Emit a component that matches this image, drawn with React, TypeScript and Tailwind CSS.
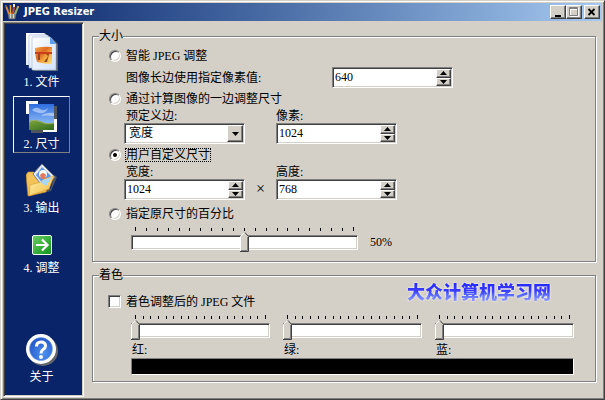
import { useId, useState } from 'react';
import type { ReactNode } from 'react';

const sunken =
  'border border-[#808080] border-r-white border-b-white bg-white shadow-[inset_1px_1px_0_#404040,inset_-1px_-1px_0_#d4d0c8]';
const raised =
  'border border-white border-r-[#404040] border-b-[#404040] bg-[#d4d0c8] shadow-[inset_-1px_-1px_0_#808080]';

function BrushesIcon() {
  return (
    <svg width="16" height="16" viewBox="0 0 16 16" fill="none">
      <path d="M4 9h8l-1 6H5z" fill="#8a8f86" stroke="#6b6f70" strokeWidth="0.6" />
      <path d="M6.500 10v4M9.500 10v4" stroke="#d5d9c6" />
      <path d="M5 10 2 2" stroke="#d88a40" strokeWidth="2" />
      <path d="M6.500 10V1" stroke="#e0b04c" strokeWidth="1.500" />
      <path d="M9 10l1-8" stroke="#d2482c" strokeWidth="2" />
      <path d="m11 10 3-7" stroke="#8fb06a" strokeWidth="2" />
      <path d="M1 1h2v2H1z" fill="#6f5b4c" />
      <path d="M9 0h2v3H9z" fill="#f0e2b8" />
      <path d="M13 2h2v2h-2z" fill="#c49870" />
    </svg>
  );
}

function FilesIcon() {
  return (
    <svg width="32" height="38" viewBox="0 0 32 38">
      <defs>
        <linearGradient id="files-page" x1="0" y1="0" x2="1" y2="1">
          <stop offset="0" stopColor="#ffffff" />
          <stop offset="1" stopColor="#cfe0fb" />
        </linearGradient>
        <linearGradient id="files-sun" x1="0" y1="0" x2="1" y2="1">
          <stop offset="0" stopColor="#f8a848" />
          <stop offset="0.4" stopColor="#dc6a24" />
          <stop offset="0.6" stopColor="#f3a53c" />
          <stop offset="1" stopColor="#fbe27c" />
        </linearGradient>
      </defs>
      <path d="M1 0h18l6 6v26H1z" fill="#6f7888" />
      <path d="M0 0h18l5 5v27H0z" fill="url(#files-page)" />
      <path d="M4 2h18l6 6v27H3z" fill="#7b8494" />
      <path d="M3 2h18l5 5v28H3z" fill="url(#files-page)" stroke="#9fb4dc" strokeWidth="0.6" />
      <path d="M7 4h18l7 7v27H8z" fill="#5d6066" />
      <path d="M6 4h18l6 7v26H6z" fill="url(#files-page)" stroke="#9fb4dc" strokeWidth="0.6" />
      <path d="M24 4v7h6z" fill="#5b9cf5" />
      <path d="M9 15q8-2 17-1v17q-8 0-15-2-2-6-2-14z" fill="url(#files-sun)" />
      <path d="M9 19h17v2H9z" fill="#c8401a" />
      <path d="M12 21h2v6h-2zM20 21q3 2 1 4t-3 4h3l2-8z" fill="#9a4522" />
    </svg>
  );
}

function PictureIcon() {
  return (
    <svg width="32" height="32" viewBox="0 0 32 32">
      <defs>
        <linearGradient id="picture-sky" x1="0" y1="0" x2="0" y2="1">
          <stop offset="0" stopColor="#2f6de0" />
          <stop offset="1" stopColor="#a9d2fb" />
        </linearGradient>
        <linearGradient id="picture-grass" x1="0" y1="0" x2="1" y2="1">
          <stop offset="0" stopColor="#7da53c" />
          <stop offset="1" stopColor="#2f6a1e" />
        </linearGradient>
      </defs>
      <path d="M0 0h12v3H3v10H0z" fill="#ffffff" />
      <path d="M28 5h3v13h-3zM5 29h12v3H5z" fill="#50545c" />
      <path d="M28 18h3v13H17v-3h11z" fill="#ffffff" />
      <path d="M3 3h25v26H3z" fill="url(#picture-sky)" />
      <path d="M6 9q4-4 8-1t8-1q-2 6-8 5T6 9zM15 15q5-4 13-3v3q-8-1-13 0z" fill="#dcebff" opacity="0.55" />
      <path d="M3 21q8-3 13 0t12 1v7H3z" fill="url(#picture-grass)" />
      <path d="M3 20q7-2 12 1t13 1" stroke="#9cae55" fill="none" />
    </svg>
  );
}

function FolderIcon() {
  return (
    <svg width="32" height="34" viewBox="0 0 32 34">
      <defs>
        <linearGradient id="folder-front" x1="0" y1="0" x2="1" y2="1">
          <stop offset="0" stopColor="#fff3b4" />
          <stop offset="1" stopColor="#f0b838" />
        </linearGradient>
      </defs>
      <path d="m4 33 21-5 6-14-3-2-3 13z" fill="#4d5360" />
      <path d="m0 12 2-3h6l2 2 6-1 8 3-4 16-18 4z" fill="#f3c258" stroke="#c58a2c" strokeWidth="0.6" />
      <path d="M16 1 29 14 17 24 7 11z" fill="#e8ecf2" stroke="#737b8a" />
      <path d="m16 4 9 9-8 8-7-9z" fill="#5d97ea" />
      <circle cx="17" cy="11" r="4" fill="#ffffff" />
      <path d="M14 12q3-4 6 0l-1 4h-4z" fill="#e27a58" />
      <path d="m3 33 1-11 11-3 3-3 10-3-5 13z" fill="url(#folder-front)" stroke="#d29a34" strokeWidth="0.6" />
      <path d="m14 19 3-2 9-3-6 9z" fill="#a9d5f8" />
    </svg>
  );
}

function ArrowIcon() {
  return (
    <svg width="32" height="30" viewBox="0 0 32 30">
      <defs>
        <linearGradient id="arrow-green" x1="0" y1="0" x2="1" y2="1">
          <stop offset="0" stopColor="#69cf64" />
          <stop offset="1" stopColor="#10921a" />
        </linearGradient>
      </defs>
      <rect x="6.500" y="8.500" width="19" height="19" rx="1.500" fill="url(#arrow-green)" stroke="#f4fff2" />
      <path d="M10 18h11M16 12.500l5.500 5.500-5.500 5.500" stroke="#ffffff" strokeWidth="2.200" fill="none" />
    </svg>
  );
}

function HelpIcon() {
  return (
    <svg width="32" height="32" viewBox="0 0 32 32" fill="none">
      <defs>
        <radialGradient id="help-blue" cx="0.6" cy="0.7" r="0.7">
          <stop offset="0" stopColor="#4f93f0" />
          <stop offset="1" stopColor="#2457c8" />
        </radialGradient>
      </defs>
      <circle cx="17" cy="17" r="15" fill="#63666c" />
      <circle cx="15" cy="15" r="15" fill="#ffffff" />
      <circle cx="15" cy="15" r="11.500" fill="url(#help-blue)" stroke="#7fa6e8" strokeWidth="0.6" />
      <path d="M10.500 12.500q0-4.500 4.500-4.500t4.500 4q0 2-2.500 3.500-2 1.200-2 4" stroke="#ffffff" strokeWidth="3" />
      <circle cx="15" cy="23" r="2" fill="#ffffff" />
    </svg>
  );
}

interface NavButtonProps {
  icon: ReactNode;
  num?: string;
  label: string;
  active?: boolean;
  onClick?: () => void;
}

function NavButton({ icon, num, label, active, onClick }: NavButtonProps) {
  return (
    <button
      type="button"
      onClick={onClick}
      className={`flex w-[57px] flex-col items-center gap-[5px] border px-1 pt-1 pb-[2px] leading-3 text-white ${
        active ? 'border-white border-r-[#808080] border-b-[#808080]' : 'border-transparent'
      }`}
    >
      {icon}
      <span className="flex gap-[3px] whitespace-nowrap">
        {num && <span>{num}</span>}
        <span>{label}</span>
      </span>
    </button>
  );
}

interface GroupProps {
  title: string;
  children: ReactNode;
}

function Group({ title, children }: GroupProps) {
  return (
    <fieldset className="relative min-w-0 border border-[#808080] pl-4 shadow-[1px_1px_0_#fff,inset_1px_1px_0_#fff]">
      <legend className="relative -ml-[10px] bg-[#d4d0c8] leading-3">{title}</legend>
      {children}
    </fieldset>
  );
}

interface ModeProps {
  value: string;
  label: string;
  mode: string;
  onChange: (value: string) => void;
}

function Mode({ value, label, mode, onChange }: ModeProps) {
  const id = useId();
  const checked = mode === value;
  return (
    <div className="flex h-5 items-center gap-1">
      <input
        id={id}
        type="radio"
        name="mode"
        checked={checked}
        onChange={() => onChange(value)}
        className="grid size-3 shrink-0 appearance-none place-items-center rounded-full border border-[#808080] border-r-white border-b-white bg-white shadow-[inset_1px_1px_0_#404040,inset_-1px_-1px_0_#d4d0c8] checked:before:size-1 checked:before:rounded-full checked:before:bg-black"
      />
      <label
        htmlFor={id}
        className={`border border-dotted leading-3 ${checked ? 'border-black' : 'border-transparent'}`}
      >
        {label}
      </label>
    </div>
  );
}

function Spin({ id, initial }: { id: string; initial: number }) {
  const [value, setValue] = useState(initial);
  return (
    <div className={`flex h-[21px] w-[121px] p-px ${sunken}`}>
      <input
        id={id}
        type="text"
        value={value}
        onChange={(e) => setValue(Number(e.target.value) || 0)}
        className="min-w-0 flex-1 px-px pb-px leading-4 outline-none"
      />
      <div className="flex w-[15px] flex-col">
        <button
          type="button"
          aria-label="+"
          onClick={() => setValue(value + 1)}
          className={`flex flex-1 items-center justify-center ${raised}`}
        >
          <svg width="7" height="4" viewBox="0 0 7 4">
            <path d="M3.500 0 7 4H0z" />
          </svg>
        </button>
        <button
          type="button"
          aria-label="-"
          onClick={() => setValue(value - 1)}
          className={`flex flex-1 items-center justify-center ${raised}`}
        >
          <svg width="7" height="4" viewBox="0 0 7 4">
            <path d="M0 0h7L3.500 4z" />
          </svg>
        </button>
      </div>
    </div>
  );
}

interface SliderProps {
  id: string;
  ticks: number;
  value: number;
  max: number;
  onChange: (value: number) => void;
}

function Slider({ id, ticks, value, max, onChange }: SliderProps) {
  const ratio = value / max;
  return (
    <div className="relative h-[25px]">
      <div className="flex h-1 items-end justify-between px-1">
        {Array.from({ length: ticks }, (_, i) => (
          <span key={i} className="h-[3px] w-px bg-black first:h-1 last:h-1" />
        ))}
      </div>
      <div className={`mt-1 h-[15px] ${sunken}`} />
      <svg
        width="9"
        height="20"
        viewBox="0 0 9 20"
        className="absolute bottom-0"
        style={{ left: `calc(${ratio * 100}% - ${ratio * 9}px)` }}
      >
        <path d="M0 4.500 4.500 0 9 4.500V20H0z" fill="#d4d0c8" />
        <path d="M.5 19V4.500l4-4" stroke="#ffffff" fill="none" />
        <path d="M7.500 5v13.500H1" stroke="#808080" fill="none" />
        <path d="m5 .5 3.500 4v15H0" stroke="#404040" fill="none" />
      </svg>
      <input
        id={id}
        type="range"
        min={0}
        max={max}
        value={value}
        onChange={(e) => onChange(Number(e.target.value))}
        className="absolute inset-x-0 bottom-0 h-5 w-full opacity-0"
      />
    </div>
  );
}

function TitleBar() {
  return (
    <header className="mb-px flex h-[18px] items-center bg-gradient-to-r from-[#0a246a] to-[#a6caf0] pr-[2px] pl-px">
      <BrushesIcon />
      <h1 className="ml-1 flex-1 font-['DejaVu_Sans_Condensed','DejaVu_Sans',sans-serif] text-[11px] font-bold text-white">
        JPEG Resizer
      </h1>
      <button type="button" aria-label="最小化" className={`flex h-[14px] w-4 items-center justify-center ${raised}`}>
        <svg width="12" height="10" viewBox="0 0 12 10">
          <path d="M3 8h6v2H3z" />
        </svg>
      </button>
      <button type="button" aria-label="最大化" disabled className={`flex h-[14px] w-4 items-center justify-center ${raised}`}>
        <svg width="12" height="10" viewBox="0 0 12 10" fill="none">
          <path d="M2.500 1v8.500h8V1M2 2.500h8" stroke="#ffffff" />
          <path d="M1.500.5h8v8h-8zM1 1.500h9" stroke="#808080" />
        </svg>
      </button>
      <button type="button" aria-label="关闭" className={`ml-[2px] flex h-[14px] w-4 items-center justify-center ${raised}`}>
        <svg width="12" height="10" viewBox="0 0 12 10">
          <path d="m2.500 2 6 6m0-6-6 6" stroke="#000000" strokeWidth="1.800" />
        </svg>
      </button>
    </header>
  );
}

const steps = [
  { num: '1.', label: '文件', icon: <FilesIcon /> },
  { num: '2.', label: '尺寸', icon: <PictureIcon /> },
  { num: '3.', label: '输出', icon: <FolderIcon /> },
  { num: '4.', label: '调整', icon: <ArrowIcon /> },
];

const channels = [
  { id: 'red', label: '红:' },
  { id: 'green', label: '绿:' },
  { id: 'blue', label: '蓝:' },
];

export default function App() {
  const [step, setStep] = useState(1);
  const [mode, setMode] = useState('custom');
  const [percent, setPercent] = useState(50);
  const [tint, setTint] = useState([0, 0, 0]);

  return (
    <div className="flex min-h-screen flex-col border border-[#d4d0c8] border-r-[#404040] border-b-[#404040] bg-[#d4d0c8] p-[2px] font-['Liberation_Serif','Noto_Sans_CJK_SC',serif] text-[12px] text-black shadow-[inset_1px_1px_0_#fff,inset_-1px_-1px_0_#808080]">
      <TitleBar />
      <div className="flex flex-1">
        <nav className="flex w-[81px] shrink-0 flex-col items-start gap-[5px] border border-[#808080] border-r-white border-b-white bg-[#0a246a] pt-[5px] pb-[10px] pl-[9px] shadow-[inset_1px_1px_0_#404040,inset_-1px_-1px_0_#d4d0c8]">
          {steps.map((s, i) => (
            <NavButton key={s.num} {...s} active={i === step} onClick={() => setStep(i)} />
          ))}
          <div className="mt-auto">
            <NavButton icon={<HelpIcon />} label="关于" />
          </div>
        </nav>

        <main className="min-w-0 flex-1 pt-2 pr-[6px] pl-2">
          <Group title="大小">
            <div className="flex flex-col gap-px pt-1 pb-[9px]">
              <Mode value="smart" label="智能 JPEG 调整" mode={mode} onChange={setMode} />
              <div className="flex items-center pl-[15px]">
                <label htmlFor="longest" className="w-52 pl-[2px] leading-3">
                  图像长边使用指定像素值:
                </label>
                <Spin id="longest" initial={640} />
              </div>

              <Mode value="side" label="通过计算图像的一边调整尺寸" mode={mode} onChange={setMode} />
              <div className="grid grid-cols-[121px_121px] gap-x-[31px] gap-y-px pl-[15px]">
                <label htmlFor="side" className="pl-[2px] leading-3">
                  预定义边:
                </label>
                <label htmlFor="pixels" className="leading-3">
                  像素:
                </label>
                <div className={`relative h-[21px] p-px ${sunken}`}>
                  <select id="side" className="block h-full w-full appearance-none pb-px pl-[3px] leading-4 outline-none">
                    <option>宽度</option>
                    <option>高度</option>
                  </select>
                  <span className={`pointer-events-none absolute inset-y-px right-px flex w-4 items-center justify-center ${raised}`}>
                    <svg width="7" height="4" viewBox="0 0 7 4">
                      <path d="M0 0h7L3.500 4z" />
                    </svg>
                  </span>
                </div>
                <Spin id="pixels" initial={1024} />
              </div>

              <Mode value="custom" label="用户自定义尺寸" mode={mode} onChange={setMode} />
              <div className="grid grid-cols-[121px_31px_121px] gap-y-px pl-[15px]">
                <label htmlFor="width" className="col-span-2 pl-[2px] leading-3">
                  宽度:
                </label>
                <label htmlFor="height" className="leading-3">
                  高度:
                </label>
                <Spin id="width" initial={1024} />
                <span className="text-center text-[16px] leading-5">×</span>
                <Spin id="height" initial={768} />
              </div>

              <div className="pt-[3px]">
                <Mode value="percent" label="指定原尺寸的百分比" mode={mode} onChange={setMode} />
              </div>
              <div className="flex items-end gap-3 pt-[2px] pl-[22px]">
                <div className="w-[227px]">
                  <Slider id="percent" ticks={21} value={percent} max={100} onChange={setPercent} />
                </div>
                <label htmlFor="percent" className="leading-5">
                  {percent}%
                </label>
              </div>
            </div>
          </Group>

          <div className="pt-[7px]">
            <Group title="着色">
              <div className="flex items-center gap-[5px] pt-[14px]">
                <input
                  id="tint"
                  type="checkbox"
                  className={`-ml-px size-[13px] shrink-0 appearance-none checked:bg-black ${sunken}`}
                />
                <label htmlFor="tint" className="leading-3">
                  着色调整后的 JPEG 文件
                </label>
              </div>
              <div className="pt-[7px] pr-[21px] pb-[6px] pl-[22px]">
                <div className="flex gap-[13px]">
                  {channels.map((c, i) => (
                    <div key={c.id} className="flex-1">
                      <Slider
                        id={c.id}
                        ticks={18}
                        value={tint[i]}
                        max={255}
                        onChange={(v) => setTint(tint.map((t, n) => (n === i ? v : t)))}
                      />
                      <label htmlFor={c.id} className="mt-1 block pl-px leading-3">
                        {c.label}
                      </label>
                    </div>
                  ))}
                </div>
                <div
                  className="mt-[2px] h-[17px] border border-[#808080] border-r-white border-b-white"
                  style={{ backgroundColor: `rgb(${tint.join(',')})` }}
                />
              </div>
              <p className="absolute -top-[2px] right-11 bg-gradient-to-b from-[#1a1aff] via-[#3a3aff] to-[#a9a9ff] bg-clip-text font-['Noto_Sans_CJK_SC',sans-serif] text-[18px] leading-6 font-black text-transparent drop-shadow-[0_0_1px_#fff]">
                大众计算机学习网
              </p>
            </Group>
          </div>
        </main>
      </div>
    </div>
  );
}
